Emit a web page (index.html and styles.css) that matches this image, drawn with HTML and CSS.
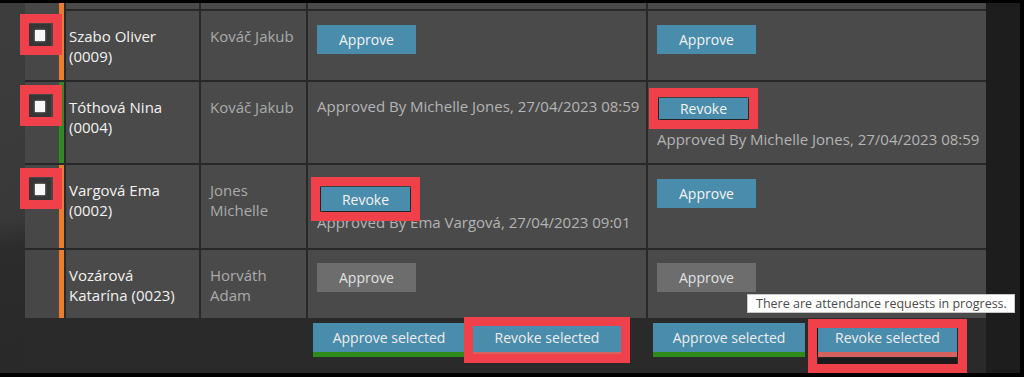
FILE: index.html
```html
<!DOCTYPE html>
<html lang="en">
<head>
<meta charset="utf-8">
<title>Attendance approvals</title>
<link rel="stylesheet" href="styles.css">
</head>
<body>
<div class="screen">
  <div class="gutter gutter--left"></div>
  <div class="content">
    <div class="table">
      <div class="cell cell--check"></div>
      <div class="cell"></div>
      <div class="cell"></div>
      <div class="cell"></div>
      <div class="cell"></div>

      <div class="cell cell--check"><span class="checkbox hl hl--check"></span></div>
      <div class="cell cell--name">Szabo Oliver<br>(0009)</div>
      <div class="cell cell--sup">Kováč Jakub</div>
      <div class="cell cell--act"><span class="btn">Approve</span></div>
      <div class="cell cell--act"><span class="btn">Approve</span></div>

      <div class="cell cell--check cell--ok"><span class="checkbox hl hl--check"></span></div>
      <div class="cell cell--name">Tóthová Nina<br>(0004)</div>
      <div class="cell cell--sup">Kováč Jakub</div>
      <div class="cell cell--act"><p class="note">Approved By Michelle Jones, 27/04/2023 08:59</p></div>
      <div class="cell cell--act cell--revoke"><span class="btn btn--revoke hl hl--btn">Revoke</span><p class="note note--after">Approved By Michelle Jones, 27/04/2023 08:59</p></div>

      <div class="cell cell--check"><span class="checkbox hl hl--check"></span></div>
      <div class="cell cell--name">Vargová Ema<br>(0002)</div>
      <div class="cell cell--sup">Jones<br>Michelle</div>
      <div class="cell cell--act cell--revoke-low"><span class="btn btn--revoke btn--tall hl hl--btn">Revoke</span><p class="note note--tight">Approved By Ema Vargová, 27/04/2023 09:01</p></div>
      <div class="cell cell--act"><span class="btn">Approve</span></div>

      <div class="cell cell--check"></div>
      <div class="cell cell--name">Vozárová<br>Katarína (0023)</div>
      <div class="cell cell--sup">Horváth<br>Adam</div>
      <div class="cell cell--act cell--last"><span class="btn btn--disabled">Approve</span></div>
      <div class="cell cell--act cell--last"><span class="btn btn--disabled">Approve</span></div>
    </div>
    <div class="footer">
      <div class="bulk bulk--first">
        <span class="bulk-btn bulk-btn--approve">Approve selected</span>
        <span class="bulk-btn bulk-btn--revoke hl hl--bulk1">Revoke selected</span>
      </div>
      <div class="bulk bulk--second">
        <span class="bulk-btn bulk-btn--approve">Approve selected</span>
        <div class="bulk-stack hl hl--bulk2">
          <span class="bulk-btn bulk-btn--revoke bulk-btn--narrow">Revoke selected</span>
          <span class="progress"></span>
        </div>
      </div>
      <div class="tooltip">There are attendance requests in progress.</div>
    </div>
  </div>
  <div class="gutter gutter--right"></div>
</div>
</body>
</html>
```
FILE: styles.css
```css
html, body {
  margin: 0;
  padding: 0;
}
body {
  background: #000;
  width: 1024px;
  height: 377px;
  overflow: hidden;
  font-family: "Open Sans", "Noto Sans", sans-serif;
  font-size: 14px;
}
.screen {
  display: grid;
  grid-template-columns: 25px 961px 34px;
  width: 1020px;
  height: 370px;
  margin-top: 3px;
}
.gutter--left {
  background: linear-gradient(172deg, #3d3d3d 0%, #393939 58%, #2c2c2c 66%, #292929 100%);
}
.gutter--right {
  background: #1d1d1d;
}
.content {
  display: flex;
  flex-direction: column;
}
.table {
  display: grid;
  grid-template-columns: 39px 133px 105px 338px 338px;
  grid-template-rows: 6px 69px 81px 83px 68px;
  gap: 2px;
  background: #282828;
}
.cell {
  background: #4a4a4a;
  box-sizing: border-box;
  min-width: 0;
}
.cell--check {
  border-right: 5px solid #ef7c2b;
  padding: 13px 0 0 4px;
  background: #474747;
}
.cell--ok {
  border-right-color: #2f8b1f;
}
.checkbox {
  display: flex;
  align-items: center;
  justify-content: center;
  width: 22px;
  height: 22px;
  background: #363636;
  position: relative;
}
.checkbox::before {
  content: "";
  width: 10px;
  height: 11px;
  background: #f7f7f7;
  box-shadow: 0 0 2px rgba(255, 255, 255, 0.6);
}
.hl {
  position: relative;
}
.hl::after {
  content: "";
  position: absolute;
  border: 9px solid #f0404a;
  pointer-events: none;
  z-index: 1;
}
.hl--check::after {
  inset: -10px -11px -9px -9px;
}
.hl--btn::after {
  inset: -10px -10px -10px -10px;
}
.hl--bulk1::after {
  inset: -6px -9px -11px -9px;
}
.hl--bulk2::after {
  inset: -4px -10px -6px -10px;
}
.cell--name {
  color: #f2f2f2;
  font-size: 15px;
  line-height: 20px;
  padding: 15px 4px 0 3px;
}
.cell--sup {
  color: #ababab;
  font-size: 15px;
  line-height: 20px;
  padding: 15px 4px 0 9px;
}
.cell--act {
  padding: 14px 0 0 9px;
  display: flex;
  flex-direction: column;
  align-items: flex-start;
}
.cell--revoke {
  padding-top: 16px;
}
.cell--revoke .btn--revoke {
  margin-left: 2px;
}
.cell--revoke-low {
  padding-top: 22px;
}
.cell--revoke-low .btn--revoke {
  margin-left: 4px;
}
.cell--last {
  padding-top: 13px;
}
.btn {
  display: flex;
  align-items: center;
  justify-content: center;
  width: 99px;
  height: 29px;
  background: #4a8cab;
  color: #f4f4f4;
  font-size: 14px;
}
.btn--disabled {
  background: #6d6d6d;
  color: #e2e2e2;
}
.btn--revoke {
  width: 89px;
  height: 21px;
  box-shadow: 1px 1px 2px rgba(0, 0, 0, 0.7), -1px 0 1px rgba(0, 0, 0, 0.5);
}
.btn--tall {
  height: 24px;
}
.note {
  margin: 0;
  color: #b4b4b4;
  font-size: 15px;
  line-height: 20px;
  white-space: nowrap;
}
.note--after {
  margin-top: 10px;
}
.note--tight {
  margin-top: 1px;
}
.footer {
  flex: 1;
  display: grid;
  grid-template-columns: 39px 133px 105px 338px 338px;
  column-gap: 2px;
  background: #2a2a2a;
  position: relative;
}
.bulk {
  display: flex;
  align-items: flex-start;
  padding: 5px 0 0 5px;
  gap: 8px;
}
.bulk--first {
  grid-column: 4;
}
.bulk--second {
  grid-column: 5;
  gap: 13px;
}
.bulk-btn {
  display: flex;
  align-items: center;
  justify-content: center;
  height: 29px;
  background: #4a8cab;
  color: #eeeeee;
  font-size: 14px;
  border-bottom: 5px solid #2f8a1c;
}
.bulk-btn--approve {
  width: 152px;
}
.bulk-btn--revoke {
  width: 148px;
  border-bottom-color: #d6625f;
  box-shadow: 0 2px 0 #262626, -1px 0 1px rgba(0, 0, 0, 0.6);
}
.bulk-btn--narrow {
  width: 139px;
}
.bulk-stack {
  display: flex;
  flex-direction: column;
  gap: 1px;
}
.progress {
  height: 9px;
  background: #1b1b1b;
}
.tooltip {
  position: absolute;
  left: 722px;
  top: -24px;
  height: 19px;
  box-sizing: border-box;
  width: 268px;
  padding: 0 0 0 8px;
  background: #ffffff;
  border: 1px solid #c8c8c8;
  color: #4a4a4a;
  font-size: 12.5px;
  line-height: 17px;
  white-space: nowrap;
  z-index: 2;
}
```
